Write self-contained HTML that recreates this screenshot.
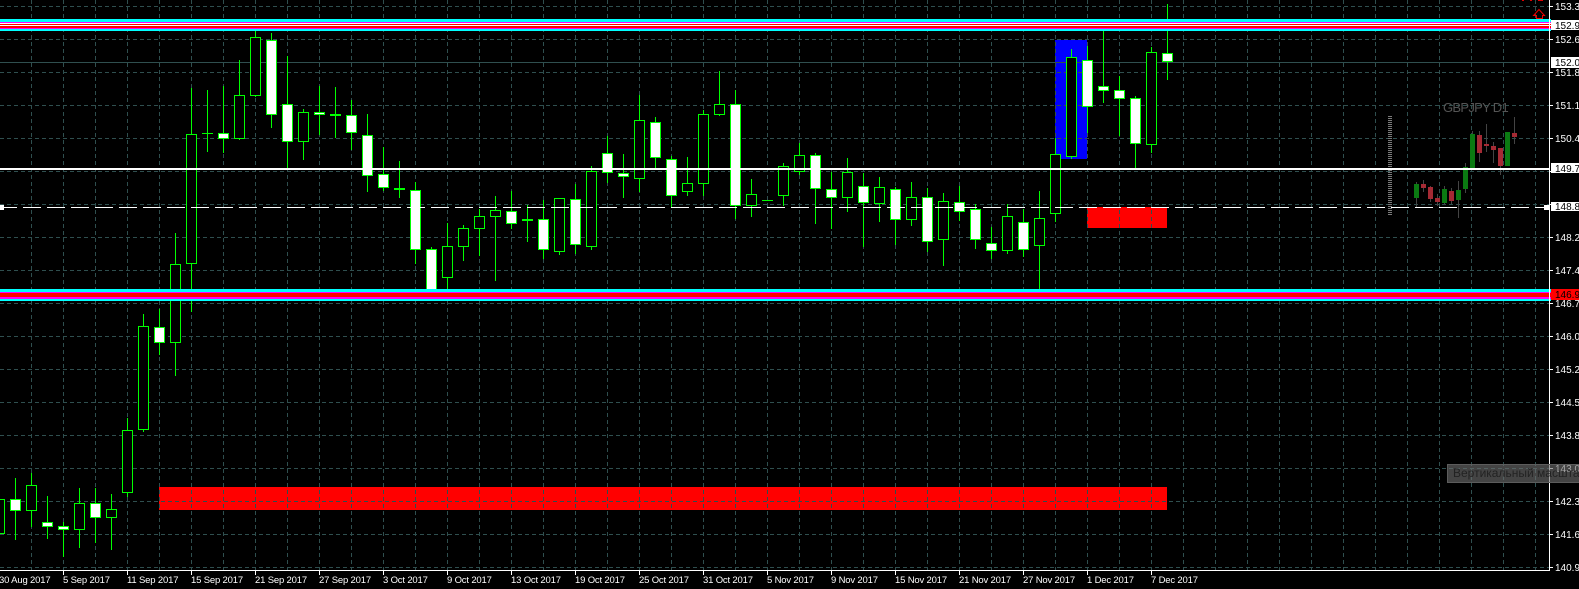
<!DOCTYPE html>
<html lang="ru"><head><meta charset="utf-8"><title>GBPJPY D1</title>
<style>
html,body{margin:0;padding:0;background:#000;width:1579px;height:589px;overflow:hidden}
svg{display:block}
text{font-family:"Liberation Sans",sans-serif;font-size:10px;fill:#fff}
.d text{font-size:9.5px;letter-spacing:-.17px}
.c rect,.c path{shape-rendering:crispEdges}
</style></head><body>
<svg width="1579" height="589" viewBox="0 0 1579 589" xmlns="http://www.w3.org/2000/svg">
<rect width="1579" height="589" fill="#000"/>
<g shape-rendering="crispEdges">
<rect x="159" y="487" width="1008" height="23" fill="#f00"/>
<rect x="1087" y="207" width="80" height="21" fill="#f00"/>
<rect x="1055" y="40" width="32" height="119" fill="#00f"/>
<path fill="none" stroke="#2f4f4f" stroke-dasharray="4 3" d="M0 6.5H1549M0 39.5H1549M0 72.5H1549M0 105.5H1549M0 138.5H1549M0 171.5H1549M0 204.5H1549M0 237.5H1549M0 270.5H1549M0 303.5H1549M0 336.5H1549M0 369.5H1549M0 402.5H1549M0 435.5H1549M0 468.5H1549M0 501.5H1549M0 534.5H1549M0 567.5H1549M31.5 0V570M63.5 0V570M95.5 0V570M127.5 0V570M159.5 0V570M191.5 0V570M223.5 0V570M255.5 0V570M287.5 0V570M319.5 0V570M351.5 0V570M383.5 0V570M415.5 0V570M447.5 0V570M479.5 0V570M511.5 0V570M543.5 0V570M575.5 0V570M607.5 0V570M639.5 0V570M671.5 0V570M703.5 0V570M735.5 0V570M767.5 0V570M799.5 0V570M831.5 0V570M863.5 0V570M895.5 0V570M927.5 0V570M959.5 0V570M991.5 0V570M1023.5 0V570M1055.5 0V570M1087.5 0V570M1119.5 0V570M1151.5 0V570M1183.5 0V570M1215.5 0V570M1247.5 0V570M1279.5 0V570M1311.5 0V570M1343.5 0V570M1375.5 0V570M1407.5 0V570M1439.5 0V570M1471.5 0V570M1503.5 0V570M1535.5 0V570"/>
<rect x="0" y="62" width="1549" height="1" fill="#2f4f4f"/>
</g>
<!-- ghost mini chart -->
<g shape-rendering="crispEdges">
<path fill="none" stroke="#7a7a7a" stroke-width="4" stroke-dasharray="1 1" d="M1390 116V215"/>
<path fill="none" stroke="#444" d="M1416.5 182V207M1423.5 180V192M1430.5 186V202M1437.5 194V206M1444.5 186V205M1451.5 188V204M1458.5 181V218M1465.5 163V193M1472.5 131V168M1479.5 131V162M1486.5 124V152M1493.5 142V163M1500.5 148V175M1507.5 132V166M1514.5 117V144"/>
<g fill="#0b7a12">
<rect x="1414" y="184" width="5" height="14"/><rect x="1442" y="189" width="5" height="14"/><rect x="1456" y="190" width="5" height="10"/><rect x="1463" y="167" width="5" height="22"/><rect x="1470" y="134" width="5" height="34"/><rect x="1505" y="132" width="5" height="34"/>
</g>
<g fill="#a52a34">
<rect x="1421" y="184" width="5" height="4"/><rect x="1428" y="187" width="5" height="12"/><rect x="1435" y="198" width="5" height="4"/><rect x="1449" y="191" width="5" height="10"/><rect x="1477" y="135" width="5" height="18"/><rect x="1484" y="144" width="5" height="2"/><rect x="1491" y="146" width="5" height="4"/><rect x="1498" y="148" width="5" height="18"/><rect x="1512" y="133" width="5" height="4"/>
</g>
</g>
<text x="1443" y="112" style="font-size:13px;fill:#555;letter-spacing:-.7px">GBPJPY D1</text>
<!-- red arrow -->
<path d="M1539 9.5L1533.5 15.5H1536.5V18.5H1542.5V15.5H1544.5Z" fill="none" stroke="#e00" stroke-width="1"/>
<path d="M1522 0h2v1h-2zM1530 0h2v1h-2zM1538 0h5v1h-5z" fill="#d00"/>
<!-- candles -->
<g class="c">
<path fill="none" stroke="#0f0" d="M15.5 478V540M31.5 473V527M47.5 496V539M63.5 522V557M79.5 488V548M95.5 488V543M111.5 494V550M127.5 418V497M143.5 314V432M159.5 309V355M175.5 233V376M191.5 88V312M207.5 90V152M223.5 86V153M239.5 60V140M255.5 30V97M271.5 33V128M287.5 56V168M303.5 109V160M319.5 86V135M335.5 87V138M351.5 100V150M367.5 114V192M383.5 147V191M399.5 161V198M415.5 182V264M431.5 247V290M447.5 223V291M463.5 225V261M479.5 209V256M495.5 196V281M511.5 191V229M527.5 205V242M543.5 200V259M559.5 198V255M575.5 184V254M591.5 166V250M607.5 136V183M623.5 154V198M639.5 95V192M655.5 117V168M671.5 156V207M687.5 157V196M703.5 110V196M719.5 71V116M735.5 90V219M751.5 179V217M783.5 163V206M799.5 143V175M815.5 153V224M831.5 172V229M847.5 158V212M863.5 173V247M879.5 177V222M895.5 187V245M911.5 182V226M927.5 188V252M943.5 193V266M959.5 186V221M975.5 204V249M991.5 227V259M1007.5 204V254M1023.5 209V257M1039.5 191V289M1055.5 138V222M1071.5 49V159M1087.5 46V133M1103.5 30V103M1119.5 76V136M1135.5 96V168M1151.5 47V153M1167.5 4V80M202 133.5H213M762 200.5H773"/>
<g fill="#000" stroke="#0f0">
<rect x="-5.5" y="499.5" width="10" height="34"/><rect x="26.5" y="485.5" width="10" height="25"/><rect x="74.5" y="503.5" width="10" height="26"/><rect x="106.5" y="509.5" width="10" height="8"/><rect x="122.5" y="430.5" width="10" height="62"/><rect x="138.5" y="326.5" width="10" height="103"/><rect x="170.5" y="264.5" width="10" height="78"/><rect x="186.5" y="134.5" width="10" height="129"/><rect x="234.5" y="95.5" width="10" height="43"/><rect x="250.5" y="37.5" width="10" height="58"/><rect x="298.5" y="112.5" width="10" height="29"/><rect x="442.5" y="246.5" width="10" height="31"/><rect x="458.5" y="228.5" width="10" height="18"/><rect x="474.5" y="216.5" width="10" height="12"/><rect x="490.5" y="210.5" width="10" height="6"/><rect x="522.5" y="219.5" width="10" height="1"/><rect x="554.5" y="198.5" width="10" height="53"/><rect x="586.5" y="171.5" width="10" height="75"/><rect x="634.5" y="120.5" width="10" height="58"/><rect x="682.5" y="183.5" width="10" height="8"/><rect x="698.5" y="114.5" width="10" height="69"/><rect x="714.5" y="104.5" width="10" height="10"/><rect x="746.5" y="194.5" width="10" height="11"/><rect x="778.5" y="166.5" width="10" height="29"/><rect x="794.5" y="155.5" width="10" height="16"/><rect x="842.5" y="172.5" width="10" height="25"/><rect x="874.5" y="187.5" width="10" height="16"/><rect x="906.5" y="197.5" width="10" height="22"/><rect x="938.5" y="201.5" width="10" height="38"/><rect x="1002.5" y="216.5" width="10" height="34"/><rect x="1034.5" y="218.5" width="10" height="27"/><rect x="1050.5" y="154.5" width="10" height="59"/><rect x="1066.5" y="57.5" width="10" height="99"/><rect x="1146.5" y="52.5" width="10" height="92"/>
</g>
<g fill="#fff" stroke="#0f0">
<rect x="10.5" y="499.5" width="10" height="11"/><rect x="42.5" y="522.5" width="10" height="4"/><rect x="58.5" y="526.5" width="10" height="3"/><rect x="90.5" y="503.5" width="10" height="14"/><rect x="154.5" y="327.5" width="10" height="15"/><rect x="218.5" y="133.5" width="10" height="5"/><rect x="266.5" y="40.5" width="10" height="74"/><rect x="282.5" y="104.5" width="10" height="37"/><rect x="314.5" y="112.5" width="10" height="2"/><rect x="330.5" y="114.5" width="10" height="1" fill="#0f0"/><rect x="346.5" y="115.5" width="10" height="17"/><rect x="362.5" y="135.5" width="10" height="40"/><rect x="378.5" y="174.5" width="10" height="13"/><rect x="394.5" y="188.5" width="10" height="1" fill="#0f0"/><rect x="410.5" y="190.5" width="10" height="59"/><rect x="426.5" y="249.5" width="10" height="40"/><rect x="506.5" y="211.5" width="10" height="12"/><rect x="538.5" y="219.5" width="10" height="30"/><rect x="570.5" y="199.5" width="10" height="45"/><rect x="602.5" y="153.5" width="10" height="19"/><rect x="618.5" y="173.5" width="10" height="3"/><rect x="650.5" y="122.5" width="10" height="35"/><rect x="666.5" y="159.5" width="10" height="36"/><rect x="730.5" y="104.5" width="10" height="101"/><rect x="810.5" y="155.5" width="10" height="33"/><rect x="826.5" y="189.5" width="10" height="8"/><rect x="858.5" y="186.5" width="10" height="16"/><rect x="890.5" y="189.5" width="10" height="30"/><rect x="922.5" y="197.5" width="10" height="44"/><rect x="954.5" y="202.5" width="10" height="9"/><rect x="970.5" y="209.5" width="10" height="30"/><rect x="986.5" y="243.5" width="10" height="7"/><rect x="1018.5" y="222.5" width="10" height="27"/><rect x="1082.5" y="60.5" width="10" height="46"/><rect x="1098.5" y="86.5" width="10" height="4"/><rect x="1114.5" y="90.5" width="10" height="8"/><rect x="1130.5" y="98.5" width="10" height="45"/><rect x="1162.5" y="53.5" width="10" height="8"/>
</g>
</g>
<!-- horizontal level lines -->
<g shape-rendering="crispEdges">
<rect x="0" y="168" width="1550" height="2" fill="#fff"/>
<path d="M-1 207.5H1549" stroke="#fff" stroke-dasharray="18 6" fill="none"/>
<rect x="0" y="205" width="4" height="5" fill="#fff"/>
<rect x="1544" y="205" width="6" height="5" fill="#fff"/>
<rect x="0" y="19" width="1551" height="3" fill="#0ff"/><rect x="0" y="22" width="1551" height="1" fill="#f0f"/><rect x="0" y="23" width="1551" height="1" fill="#fff"/><rect x="0" y="24" width="1551" height="1" fill="#f00"/><rect x="0" y="25" width="1551" height="1" fill="#fff"/><rect x="0" y="26" width="1551" height="2" fill="#f00"/><rect x="0" y="28" width="1551" height="1" fill="#f0f"/><rect x="0" y="29" width="1551" height="2" fill="#0ff"/>
<rect x="0" y="289" width="1551" height="3" fill="#0ff"/><rect x="0" y="292" width="1551" height="1" fill="#f0f"/><rect x="0" y="293" width="1551" height="4" fill="#f00"/><rect x="0" y="297" width="1551" height="2" fill="#f0f"/><rect x="0" y="299" width="1551" height="2" fill="#0ff"/>
<!-- axes -->
<rect x="1549" y="0" width="1" height="571" fill="#fff"/>
<rect x="0" y="570" width="1550" height="1" fill="#fff"/>
<path fill="none" stroke="#fff" d="M1550 6.5H1553M1550 39.5H1553M1550 72.5H1553M1550 105.5H1553M1550 138.5H1553M1550 171.5H1553M1550 204.5H1553M1550 237.5H1553M1550 270.5H1553M1550 303.5H1553M1550 336.5H1553M1550 369.5H1553M1550 402.5H1553M1550 435.5H1553M1550 468.5H1553M1550 501.5H1553M1550 534.5H1553M1550 567.5H1553M63.5 571V575M127.5 571V575M191.5 571V575M255.5 571V575M319.5 571V575M383.5 571V575M447.5 571V575M511.5 571V575M575.5 571V575M639.5 571V575M703.5 571V575M767.5 571V575M831.5 571V575M895.5 571V575M959.5 571V575M1023.5 571V575M1087.5 571V575M1151.5 571V575"/>
<rect x="1551" y="20" width="28" height="10" fill="#fff"/>
<rect x="1551" y="57" width="28" height="11" fill="#fff"/>
<rect x="1551" y="163" width="28" height="10" fill="#fff"/>
<rect x="1551" y="202" width="28" height="9" fill="#fff"/>
</g>
<!-- price labels -->
<g>
<text x="1555" y="10">153.3</text>
<text x="1555" y="43">152.6</text>
<text x="1555" y="76">151.8</text>
<text x="1555" y="109">151.1</text>
<text x="1555" y="142">150.4</text>
<text x="1555" y="241">148.2</text>
<text x="1555" y="274">147.4</text>
<text x="1555" y="307">146.7</text>
<text x="1555" y="340">146.0</text>
<text x="1555" y="373">145.2</text>
<text x="1555" y="406">144.5</text>
<text x="1555" y="439">143.8</text>
<text x="1555" y="472">143.0</text>
<text x="1555" y="505">142.3</text>
<text x="1555" y="538">141.6</text>
<text x="1555" y="571">140.9</text>
</g>
<rect x="1551" y="289" width="28" height="11" fill="#f00" shape-rendering="crispEdges"/>
<g>
<text x="1555" y="29" style="fill:#000">152.9</text>
<text x="1555" y="66" style="fill:#000">152.0</text>
<text x="1555" y="172" style="fill:#000">149.7</text>
<text x="1555" y="210" style="fill:#000">148.8</text>
<text x="1555" y="298" style="fill:#000">146.9</text>
</g>
<!-- date labels -->
<g class="d">
<text x="-1" y="583">30 Aug 2017</text>
<text x="63" y="583">5 Sep 2017</text>
<text x="127" y="583">11 Sep 2017</text>
<text x="191" y="583">15 Sep 2017</text>
<text x="255" y="583">21 Sep 2017</text>
<text x="319" y="583">27 Sep 2017</text>
<text x="383" y="583">3 Oct 2017</text>
<text x="447" y="583">9 Oct 2017</text>
<text x="511" y="583">13 Oct 2017</text>
<text x="575" y="583">19 Oct 2017</text>
<text x="639" y="583">25 Oct 2017</text>
<text x="703" y="583">31 Oct 2017</text>
<text x="767" y="583">5 Nov 2017</text>
<text x="831" y="583">9 Nov 2017</text>
<text x="895" y="583">15 Nov 2017</text>
<text x="959" y="583">21 Nov 2017</text>
<text x="1023" y="583">27 Nov 2017</text>
<text x="1087" y="583">1 Dec 2017</text>
<text x="1151" y="583">7 Dec 2017</text>
</g>
<!-- tooltip -->
<rect x="1447.5" y="464.5" width="140" height="18" fill="#6e6e6e" fill-opacity=".62" stroke="#5c5c5c"/>
<text x="1453" y="477" style="font-size:12px;fill:#222">Вертикальный масштаб</text>
</svg>
</body></html>
